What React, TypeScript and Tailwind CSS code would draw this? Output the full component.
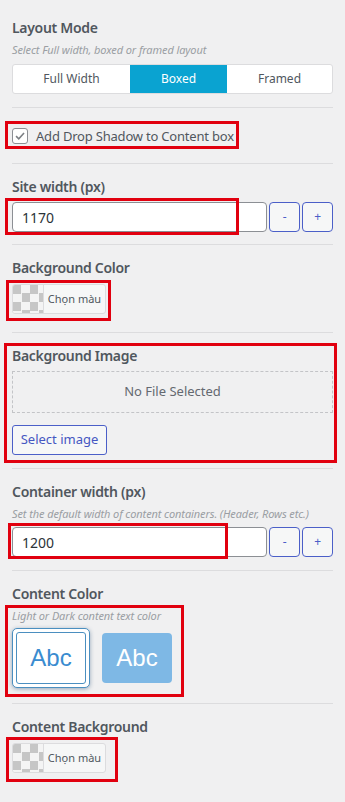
import type { ReactNode } from "react";

const font = { fontFamily: '"Noto Sans", "Open Sans", Arial, sans-serif' };

function Title({ children }: { children: ReactNode }) {
  return <div className="text-[14px] leading-[20px] font-semibold tracking-[-0.3px] text-[#50575e]">{children}</div>;
}

function Hint({ children }: { children: ReactNode }) {
  return <div className="mt-[4px] text-[11px] leading-[16px] italic tracking-[-0.1px] text-[#9a9ea3]">{children}</div>;
}

function ColorButton() {
  return (
    <button
      type="button"
      className="mt-[6px] flex h-[30px] w-[94px] items-stretch overflow-hidden rounded-[3px] border border-[#dcdcde] bg-[#f6f7f7]"
    >
      <span className="w-[31px] border-r border-[#dcdcde] bg-[conic-gradient(#f4f4f4_25%,#c6c6c6_0_50%,#f4f4f4_0_75%,#c6c6c6_0)] bg-[length:17px_17px]" />
      <span className="flex flex-1 items-center justify-center text-[11px] text-[#50575e]">Chọn màu</span>
    </button>
  );
}

function NumberField({ value }: { value: string }) {
  return (
    <div className="flex h-[30px] gap-[2px]">
      <input
        readOnly
        value={value}
        className="h-full w-[256px] rounded-[4px] border border-[#8c8f94] bg-white px-[9px] text-[14px] text-[#2c3338] outline-none"
      />
      <button type="button" className="h-full w-[31px] rounded-[4px] border border-[#4b5fc8] bg-[#f6f7f7] text-[12px] text-[#4b5fc8]">
        -
      </button>
      <button type="button" className="h-full w-[31px] rounded-[4px] border border-[#4b5fc8] bg-[#f6f7f7] text-[12px] text-[#4b5fc8]">
        +
      </button>
    </div>
  );
}

function Mark({ className }: { className: string }) {
  return <div className={`pointer-events-none absolute border-[3px] border-[#e1000f] ${className}`} />;
}

export default function App() {
  return (
    <div className="relative min-h-[802px] w-[345px] bg-[#f0f0f1] px-[12px]" style={font}>
      {/* Layout mode */}
      <section className="pt-[18px] pb-[13px]">
        <Title>Layout Mode</Title>
        <Hint>Select Full width, boxed or framed layout</Hint>
        <div className="mt-[6px] flex h-[30px] overflow-hidden rounded-[3px] border border-[#dcdcde] bg-white text-[12px] text-[#50575e]">
          <div className="flex w-[117px] items-center justify-center">Full Width</div>
          <div className="flex w-[97px] items-center justify-center bg-[#0aa3d1] text-white">Boxed</div>
          <div className="flex flex-1 items-center justify-center">Framed</div>
        </div>
      </section>

      <section className="border-t border-[#dcdcde] pt-[20px] pb-[19px]">
        <label className="flex items-center gap-[8px] text-[13px] leading-[16px] tracking-[-0.2px] text-[#50575e]">
          <span className="flex h-[16px] w-[16px] items-center justify-center rounded-[3px] border border-[#8c8f94] bg-white">
            <svg viewBox="0 0 16 16" className="h-[14px] w-[14px]" fill="none" stroke="#7b7f84" strokeWidth="1.8">
              <path d="M3.5 8.2 6.6 11.2 12.6 4.6" />
            </svg>
          </span>
          Add Drop Shadow to Content box
        </label>
      </section>

      <section className="border-t border-[#dcdcde] pt-[13px] pb-[12px]">
        <Title>Site width (px)</Title>
        <div className="mt-[5px]">
          <NumberField value="1170" />
        </div>
      </section>

      <section className="border-t border-[#dcdcde] pt-[13px] pb-[18px]">
        <Title>Background Color</Title>
        <ColorButton />
      </section>

      <section className="border-t border-[#dcdcde] pt-[13px] pb-[13px]">
        <Title>Background Image</Title>
        <div className="mt-[5px] flex h-[42px] items-center justify-center border border-dashed border-[#c3c4c7] text-[13px] text-[#646970]">
          No File Selected
        </div>
        <button
          type="button"
          className="mt-[12px] h-[30px] w-[95px] rounded-[3px] border border-[#4b5fc8] bg-[#f6f7f7] text-[13px] text-[#4557c2]"
        >
          Select image
        </button>
      </section>

      <section className="border-t border-[#dcdcde] pt-[13px] pb-[13px]">
        <Title>Container width (px)</Title>
        <Hint>Set the default width of content containers. (Header, Rows etc.)</Hint>
        <div className="mt-[5px]">
          <NumberField value="1200" />
        </div>
      </section>

      <section className="border-t border-[#dcdcde] pt-[13px] pb-[15px]">
        <Title>Content Color</Title>
        <Hint>Light or Dark content text color</Hint>
        <div className="mt-[4px] flex items-center gap-[12px]" style={{ fontFamily: '"Liberation Sans", Arial, sans-serif' }}>
          <div className="h-[60px] w-[78px] rounded-[5px] border border-[#4b8fc0] bg-white p-[3px] shadow-[0_1px_4px_rgba(40,80,120,0.45)]">
            <div className="flex h-full w-full items-center justify-center rounded-[3px] border border-[#4b8fc0] text-[24px] text-[#3a8cd0]">
              Abc
            </div>
          </div>
          <div className="flex h-[50px] w-[70px] items-center justify-center rounded-[4px] bg-[#7eb8e5] text-[24px] text-white">
            Abc
          </div>
        </div>
      </section>

      <section className="border-t border-[#dcdcde] pt-[13px] pb-[30px]">
        <Title>Content Background</Title>
        <ColorButton />
      </section>

      <Mark className="left-[5px] top-[121px] h-[28px] w-[234px]" />
      <Mark className="left-[5px] top-[198px] h-[37px] w-[234px]" />
      <Mark className="left-[6px] top-[280px] h-[41px] w-[105px]" />
      <Mark className="left-[4px] top-[343px] h-[120px] w-[333px]" />
      <Mark className="left-[8px] top-[523px] h-[36px] w-[220px]" />
      <Mark className="left-[5px] top-[605px] h-[92px] w-[179px]" />
      <Mark className="left-[6px] top-[737px] h-[45px] w-[112px]" />
    </div>
  );
}
